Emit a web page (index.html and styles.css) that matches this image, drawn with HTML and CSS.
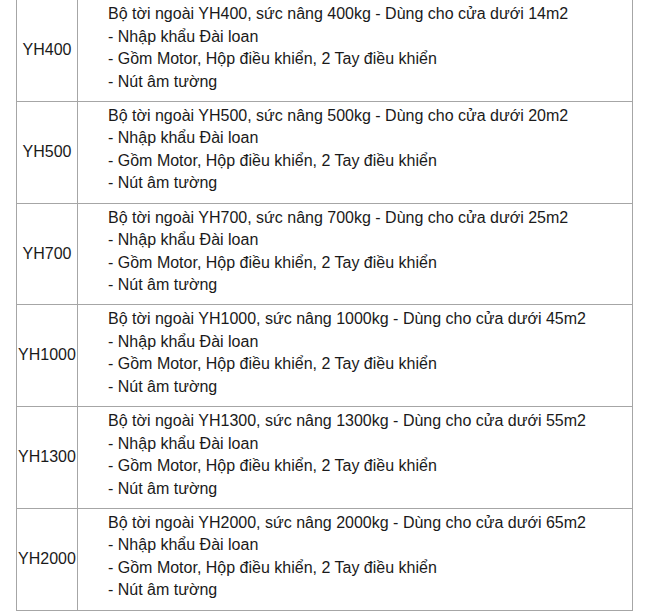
FILE: index.html
```html
<!DOCTYPE html>
<html lang="vi">
<head>
<meta charset="utf-8">
<title>Bộ tời ngoài</title>
<link rel="stylesheet" href="styles.css">
</head>
<body>
<div class="wrap">
<table class="spec">
<tbody>
<tr>
<td class="model">YH400</td>
<td class="desc">Bộ tời ngoài YH400, sức nâng 400kg - Dùng cho cửa dưới 14m2<br>- Nhập khẩu Đài loan<br>- Gồm Motor, Hộp điều khiển, 2 Tay điều khiển<br>- Nút âm tường</td>
</tr>
<tr>
<td class="model">YH500</td>
<td class="desc">Bộ tời ngoài YH500, sức nâng 500kg - Dùng cho cửa dưới 20m2<br>- Nhập khẩu Đài loan<br>- Gồm Motor, Hộp điều khiển, 2 Tay điều khiển<br>- Nút âm tường</td>
</tr>
<tr>
<td class="model">YH700</td>
<td class="desc">Bộ tời ngoài YH700, sức nâng 700kg - Dùng cho cửa dưới 25m2<br>- Nhập khẩu Đài loan<br>- Gồm Motor, Hộp điều khiển, 2 Tay điều khiển<br>- Nút âm tường</td>
</tr>
<tr>
<td class="model">YH1000</td>
<td class="desc">Bộ tời ngoài YH1000, sức nâng 1000kg - Dùng cho cửa dưới 45m2<br>- Nhập khẩu Đài loan<br>- Gồm Motor, Hộp điều khiển, 2 Tay điều khiển<br>- Nút âm tường</td>
</tr>
<tr>
<td class="model">YH1300</td>
<td class="desc">Bộ tời ngoài YH1300, sức nâng 1300kg - Dùng cho cửa dưới 55m2<br>- Nhập khẩu Đài loan<br>- Gồm Motor, Hộp điều khiển, 2 Tay điều khiển<br>- Nút âm tường</td>
</tr>
<tr>
<td class="model">YH2000</td>
<td class="desc">Bộ tời ngoài YH2000, sức nâng 2000kg - Dùng cho cửa dưới 65m2<br>- Nhập khẩu Đài loan<br>- Gồm Motor, Hộp điều khiển, 2 Tay điều khiển<br>- Nút âm tường</td>
</tr>
</tbody>
</table>
</div>
</body>
</html>
```
FILE: styles.css
```css
html, body {
  margin: 0;
  padding: 0;
  background: #ffffff;
}
.wrap {
  padding: 0 0 0 16px;
  margin-top: -1px;
}
.spec {
  border-collapse: collapse;
  width: 617px;
  font-family: "Liberation Sans", Arial, sans-serif;
  font-size: 16px;
  color: #1a1a1a;
}
.spec td {
  border: 1px solid #a6a6a6;
  line-height: 22.5px;
}
.model {
  width: 60px;
  padding: 0;
  text-align: center;
  vertical-align: middle;
}
.desc {
  padding: 3px 4px 7.75px 30px;
  text-align: left;
  vertical-align: top;
}
```
